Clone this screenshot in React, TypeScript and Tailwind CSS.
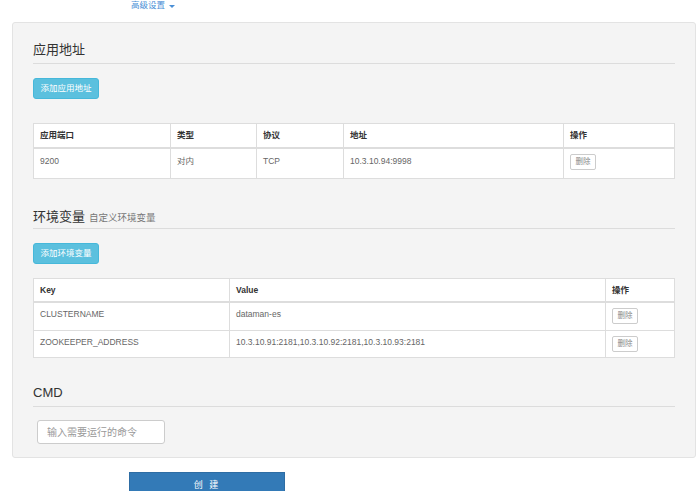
import React from 'react';

const font = "font-['Liberation_Sans','Noto_Sans_CJK_SC',sans-serif]";

interface Port {
    port: string;
    type: string;
    protocol: string;
    address: string;
}

const ports: Port[] = [{ port: '9200', type: '对内', protocol: 'TCP', address: '10.3.10.94:9998' }];

const envs = [
    { key: 'CLUSTERNAME', value: 'dataman-es' },
    { key: 'ZOOKEEPER_ADDRESS', value: '10.3.10.91:2181,10.3.10.92:2181,10.3.10.93:2181' },
];

function DeleteButton() {
    return (
        <button
            type="button"
            className="block h-[16px] w-[26px] rounded-[2px] border border-[#ccc] bg-white text-[7.5px] leading-[14px] text-[#888]"
        >
            删除
        </button>
    );
}

function InfoButton({ label }: { label: string }) {
    return (
        <button
            type="button"
            className="block h-[21px] w-[66px] rounded-[3px] border border-[#46b8da] bg-[#5bc0de] text-[8.5px] text-white"
        >
            {label}
        </button>
    );
}

export default function App() {
    return (
        <div className={`${font} w-[700px] h-[491px] overflow-hidden bg-white`}>
            <div className="h-[22px] pl-[131px]">
                <a className="flex items-center gap-[4px] text-[8.5px] leading-[11px] text-[#4a8fd6]">
                    高级设置
                    <span className="mt-[1px] h-0 w-0 border-x-[3px] border-t-[3px] border-x-transparent border-t-[#4a8fd6]"></span>
                </a>
            </div>

            <div className="ml-[12px] w-[684px] rounded-[3px] border border-[#e3e3e3] bg-[#f4f4f4] px-[20px] pt-[19px] pb-[13px]">
                {/* 应用地址 */}
                <h3 className="text-[13px] leading-[16px] text-[#333]">应用地址</h3>
                <div className="mt-[5px] border-t border-[#dcdcdc]"></div>
                <div className="mt-[14px] flex">
                    <InfoButton label="添加应用地址" />
                </div>

                <div className="mt-[24px] border border-[#ddd] bg-white text-[8.5px]">
                    <div className="grid h-[25px] grid-cols-[136px_86px_87px_220px_110px] border-b-2 border-[#ddd] font-bold text-[#333]">
                        <div className="flex items-center pl-[6px]">应用端口</div>
                        <div className="flex items-center border-l border-[#ddd] pl-[6px]">类型</div>
                        <div className="flex items-center border-l border-[#ddd] pl-[6px]">协议</div>
                        <div className="flex items-center border-l border-[#ddd] pl-[6px]">地址</div>
                        <div className="flex items-center border-l border-[#ddd] pl-[6px]">操作</div>
                    </div>
                    {ports.map((p, i) => (
                        <div key={i} className="grid h-[29px] grid-cols-[136px_86px_87px_220px_110px] leading-[12px] text-[#666]">
                            <div className="pl-[6px] pt-[6px]">{p.port}</div>
                            <div className="border-l border-[#ddd] pl-[6px] pt-[6px]">{p.type}</div>
                            <div className="border-l border-[#ddd] pl-[6px] pt-[6px]">{p.protocol}</div>
                            <div className="border-l border-[#ddd] pl-[6px] pt-[6px]">{p.address}</div>
                            <div className="border-l border-[#ddd] pl-[6px] pt-[5px]">
                                <DeleteButton />
                            </div>
                        </div>
                    ))}
                </div>

                {/* 环境变量 */}
                <h3 className="mt-[30px] flex h-[16px] items-baseline gap-[4px] text-[13px] leading-[16px] text-[#333]">
                    环境变量
                    <span className="text-[9.5px] leading-[16px] text-[#777]">自定义环境变量</span>
                </h3>
                <div className="mt-[3px] border-t border-[#dcdcdc]"></div>
                <div className="mt-[14px] flex">
                    <InfoButton label="添加环境变量" />
                </div>

                <div className="mt-[14px] border border-[#ddd] bg-white text-[8.5px]">
                    <div className="grid h-[24px] grid-cols-[195px_376px_68px] border-b-2 border-[#ddd] font-bold text-[#333]">
                        <div className="flex items-center pl-[6px]">Key</div>
                        <div className="flex items-center border-l border-[#ddd] pl-[6px]">Value</div>
                        <div className="flex items-center border-l border-[#ddd] pl-[6px]">操作</div>
                    </div>
                    {envs.map((e, i) => (
                        <div
                            key={e.key}
                            className={`grid h-[27px] grid-cols-[195px_376px_68px] leading-[12px] text-[#666] ${i > 0 ? 'border-t border-[#ddd]' : ''}`}
                        >
                            <div className="pl-[6px] pt-[5px]">{e.key}</div>
                            <div className="border-l border-[#ddd] pl-[6px] pt-[5px]">{e.value}</div>
                            <div className="border-l border-[#ddd] pl-[6px] pt-[5px]">
                                <DeleteButton />
                            </div>
                        </div>
                    ))}
                </div>

                {/* CMD */}
                <h3 className="mt-[27px] text-[13px] leading-[16px] text-[#333]">CMD</h3>
                <div className="mt-[5px] border-t border-[#dcdcdc]"></div>
                <input
                    type="text"
                    placeholder="输入需要运行的命令"
                    className="mt-[13px] ml-[4px] block h-[24px] w-[128px] rounded-[3px] border border-[#ccc] bg-white pl-[9px] text-[10px] text-[#555] placeholder-[#999] outline-none"
                />
            </div>

            <div className="mt-[14px] flex pl-[129px]">
                <button
                    type="button"
                    className="flex h-[30px] w-[156px] justify-center border border-[#2e6da4] bg-[#337ab7] pt-[6px] text-[9px] leading-[12px] tracking-[2px] text-white"
                >
                    创 建
                </button>
            </div>
        </div>
    );
}
